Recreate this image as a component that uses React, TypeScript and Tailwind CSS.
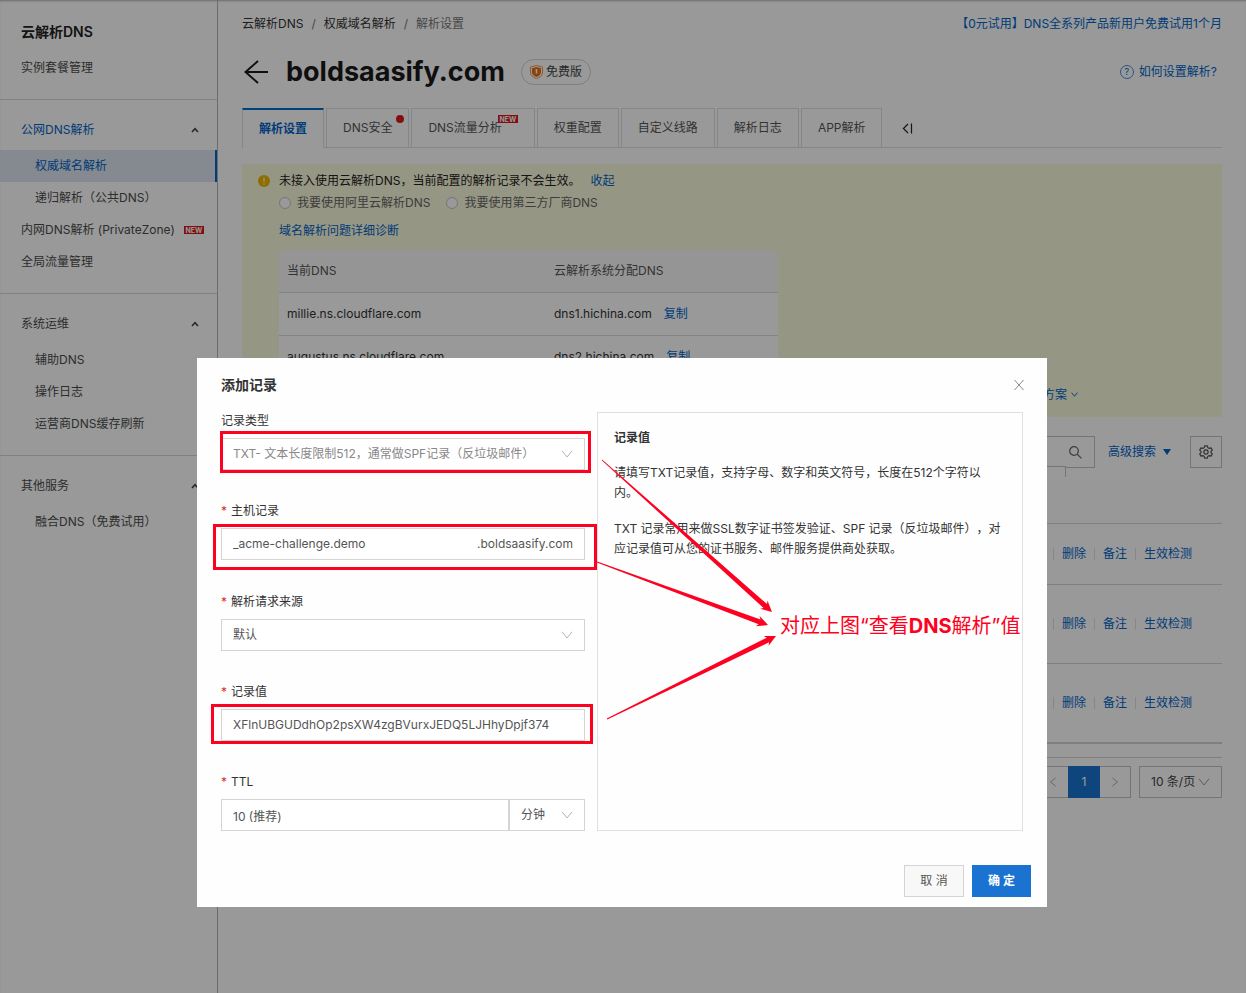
import { ReactNode, SVGProps } from "react";

const menuGroups = [
  {
    title: "公网DNS解析",
    active: true,
    items: [
      { label: "权威域名解析", nested: true, active: true },
      { label: "递归解析（公共DNS）", nested: true },
      { label: "内网DNS解析 (PrivateZone)", isNew: true },
      { label: "全局流量管理" },
    ],
  },
  {
    title: "系统运维",
    items: [
      { label: "辅助DNS", nested: true },
      { label: "操作日志", nested: true },
      { label: "运营商DNS缓存刷新", nested: true },
    ],
  },
  {
    title: "其他服务",
    items: [{ label: "融合DNS（免费试用）", nested: true }],
  },
];

const tabs = [
  { label: "解析设置", active: true },
  { label: "DNS安全", dot: true },
  { label: "DNS流量分析", isNew: true },
  { label: "权重配置" },
  { label: "自定义线路" },
  { label: "解析日志" },
  { label: "APP解析" },
];

const nameServers = [
  { current: "millie.ns.cloudflare.com", assigned: "dns1.hichina.com" },
  { current: "augustus.ns.cloudflare.com", assigned: "dns2.hichina.com" },
];

const rowHeights = ["h-[61px]", "h-[79px]", "h-20"];

function Chevron(props: SVGProps<SVGSVGElement>) {
  return (
    <svg width="12" height="12" viewBox="0 0 12 12" fill="none" stroke="currentColor" aria-hidden="true" {...props}>
      <path d="M1 2.8 L6 9 L11 2.8" />
    </svg>
  );
}

function NewBadge() {
  return (
    <span className="flex h-2 w-5 items-center justify-center bg-[#d8191f] text-[7px] leading-none font-bold text-white">
      NEW
    </span>
  );
}

function Sidebar() {
  return (
    <aside className="w-[218px] shrink-0 border-r border-[#b4b4b4] text-[#4c4c4c]">
      <div className="border-b border-[#d8d8d8] pt-3 pb-[15px]">
        <h2 className="flex h-10 items-center px-[21px] text-sm font-semibold text-[#222]">云解析DNS</h2>
        <a href="#plan" className="flex h-8 items-center px-[21px]">实例套餐管理</a>
      </div>
      {menuGroups.map((group, i) => (
        <div
          key={group.title}
          className={i < menuGroups.length - 1 ? "border-b border-[#d8d8d8] pt-[10px] pb-[15px]" : "pt-[10px]"}
        >
          <button
            className={`flex h-10 w-full items-center justify-between pr-[18px] pl-[21px] ${group.active ? "text-[#0064c8]" : ""}`}
          >
            {group.title}
            <svg width="8" height="6" viewBox="0 0 8 6" fill="none" stroke="#444" strokeWidth="1.6" aria-hidden="true">
              <path d="M1 5 L4 1.6 L7 5" />
            </svg>
          </button>
          {group.items.map((item) => (
            <a
              key={item.label}
              href="#menu"
              className={`flex h-8 items-center gap-[9px] ${item.nested ? "pl-[35px]" : "pl-[21px]"} ${
                item.active ? "border-r-2 border-[#0064c8] bg-[#dde6ee] text-[#0064c8]" : ""
              }`}
            >
              {item.label}
              {item.isNew && <NewBadge />}
            </a>
          ))}
        </div>
      ))}
    </aside>
  );
}

function TabBar() {
  return (
    <nav className="mt-3 flex h-10 items-stretch gap-0.5 border-b border-[#dce1e6]">
      {tabs.map((tab) => (
        <button
          key={tab.label}
          className={`relative -mb-px border-x px-4 ${
            tab.active
              ? "border-t-2 border-x-[#dce1e6] border-t-[#0070cc] bg-white font-semibold text-[#0064c8]"
              : "border-y border-[#dce1e6] text-[#555]"
          } ${tab.isNew ? "pr-8" : ""}`}
        >
          {tab.label}
          {tab.dot && <span className="absolute top-1.5 right-1 size-2 rounded-full bg-[#d8191f]" />}
          {tab.isNew && (
            <span className="absolute top-1.5 right-4">
              <NewBadge />
            </span>
          )}
        </button>
      ))}
      <button aria-label="收起标签" className="ml-[18px] pt-0.5 text-[#222]">
        <svg width="11" height="11" viewBox="0 0 11 11" fill="none" stroke="currentColor" strokeWidth="1.2">
          <path d="M6 1 L1.4 5.5 L6 10 M9.5 0.5 V10.5" />
        </svg>
      </button>
    </nav>
  );
}

function Notice() {
  return (
    <section className="mt-4 h-[253px] bg-[#fafbdc] pt-2 pl-[37px]">
      <div className="flex h-[18px] items-center text-[#222]">
        <svg className="mr-[9px] -ml-[21px]" width="12" height="12" viewBox="0 0 12 12" aria-hidden="true">
          <circle cx="6" cy="6" r="6" fill="#efb600" />
          <path d="M6 2.6 V7 M6 8.2 V9.6" stroke="#fafbdc" strokeWidth="1.3" />
        </svg>
        <span>未接入使用云解析DNS，当前配置的解析记录不会生效。</span>
        <a href="#collapse" className="ml-[10px] text-[#0064c8]">收起</a>
      </div>
      <div className="mt-1 flex h-[18px] items-center gap-4 text-[#666]">
        {["我要使用阿里云解析DNS", "我要使用第三方厂商DNS"].map((label) => (
          <label key={label} className="flex items-center gap-1.5">
            <input
              type="radio"
              name="dns-provider"
              className="size-3 appearance-none rounded-full border border-[#c4c4cc] bg-white"
            />
            {label}
          </label>
        ))}
      </div>
      <a href="#diagnose" className="mt-[10px] block w-fit text-[#0064c8]">域名解析问题详细诊断</a>
      <table className="mt-[10px] w-[499px] table-fixed border-collapse bg-white text-left text-[#333]">
        <thead>
          <tr className="h-[42px] border-b border-[#d9dee3] bg-[#f9f9fb] text-[#555]">
            <th className="w-[267px] pl-2 font-normal">当前DNS</th>
            <th className="pl-2 font-normal">云解析系统分配DNS</th>
          </tr>
        </thead>
        <tbody>
          {nameServers.map((ns) => (
            <tr key={ns.current} className="h-[43px] border-b border-[#d9dee3]">
              <td className="pl-2">{ns.current}</td>
              <td className="pl-2">
                {ns.assigned}
                <button className="ml-3 text-[#0064c8]">复制</button>
              </td>
            </tr>
          ))}
        </tbody>
      </table>
      <div className="mt-[7px] flex justify-end pr-36 text-[#0064c8]">
        <a href="#plans" className="flex items-center gap-1">
          方案
          <Chevron width="7" height="7" strokeWidth="1.6" />
        </a>
      </div>
    </section>
  );
}

function Toolbar() {
  return (
    <div className="mt-[19px] flex h-8 items-center justify-end">
      <div className="relative flex h-8 w-60 items-center border border-[#c4c4c4]">
        <input aria-label="搜索" className="min-w-0 flex-1 px-3 outline-none" />
        <button aria-label="搜索记录" className="mr-3 text-[#666]">
          <svg width="13" height="13" viewBox="0 0 13 13" fill="none" stroke="currentColor" strokeWidth="1.2">
            <circle cx="5" cy="5" r="4.3" />
            <path d="M8.2 8.2 L12.4 12.4" />
          </svg>
        </button>
        <span className="absolute top-[29px] right-[28px] h-[11px] w-24 border-t border-r border-[#c4c4c4] bg-white" />
      </div>
      <button className="ml-[13px] flex items-center gap-[7px] text-[#0064c8]">
        高级搜索
        <svg width="8" height="6" viewBox="0 0 8 6" fill="currentColor" aria-hidden="true">
          <path d="M0 0 H8 L4 6 Z" />
        </svg>
      </button>
      <button
        aria-label="设置"
        className="ml-[19px] flex size-8 items-center justify-center border border-[#c4c4c4] text-[#555]"
      >
        <svg width="14" height="14" viewBox="0 0 14 14" fill="none" stroke="currentColor" strokeWidth="1.2" strokeLinejoin="round">
          <path d="M5.7 0.8 H8.3 L8.8 2.6 L10.2 3.4 L12 2.9 L13.3 5.1 L12 6.4 V7.6 L13.3 8.9 L12 11.1 L10.2 10.6 L8.8 11.4 L8.3 13.2 H5.7 L5.2 11.4 L3.8 10.6 L2 11.1 L0.7 8.9 L2 7.6 V6.4 L0.7 5.1 L2 2.9 L3.8 3.4 L5.2 2.6 Z" />
          <circle cx="7" cy="7" r="2.1" />
        </svg>
      </button>
    </div>
  );
}

function Records() {
  return (
    <>
      <table className="mt-[11px] w-full border-collapse">
        <thead>
          <tr className="h-11 border-b border-[#d4d4d4] bg-[#fdfdfd]">
            <th aria-label="操作" />
          </tr>
        </thead>
        <tbody>
          {rowHeights.map((height, i) => (
            <tr key={i} className={`${height} ${i === 2 ? "border-b-2" : "border-b"} border-[#d4d4d4]`}>
              <td>
                <div className="flex items-center justify-end gap-2 pr-[30px] text-[#0064c8]">
                  <span className="h-3 w-px bg-[#e2e2e2]" />
                  <button>删除</button>
                  <span className="h-3 w-px bg-[#e2e2e2]" />
                  <button>备注</button>
                  <span className="h-3 w-px bg-[#e2e2e2]" />
                  <button>生效检测</button>
                </div>
              </td>
            </tr>
          ))}
        </tbody>
      </table>
      <div className="mt-[13px] flex justify-end border-t border-[#d4d4d4] pt-2">
        <button aria-label="上一页" className="flex h-8 w-8 items-center justify-center border border-r-0 border-[#c4c4c4] text-[#999]">
          <Chevron width="10" height="10" className="rotate-90" />
        </button>
        <button className="h-8 w-8 bg-[#1a73d0] text-white">1</button>
        <button aria-label="下一页" className="flex h-8 w-[31px] items-center justify-center border border-l-0 border-[#c4c4c4] text-[#999]">
          <Chevron width="10" height="10" className="-rotate-90" />
        </button>
        <div className="relative ml-2 w-[83px]">
          <select
            aria-label="每页条数"
            className="h-8 w-full appearance-none border border-[#c4c4c4] pl-[11px] text-[#444]"
          >
            <option>10 条/页</option>
          </select>
          <Chevron className="pointer-events-none absolute top-[10px] right-3 text-[#999]" />
        </div>
      </div>
    </>
  );
}

type FieldProps = {
  id: string;
  label: string;
  required?: boolean;
  mark?: string;
  children: ReactNode;
};

function Field({ id, label, required, mark, children }: FieldProps) {
  return (
    <div className="flex flex-col gap-2">
      <label htmlFor={id} className="flex gap-1 text-[#333]">
        {required && <span className="text-[#e02b20]">*</span>}
        {label}
      </label>
      <div className="relative flex h-8 text-[#555]">
        {children}
        {mark && <span className={`pointer-events-none absolute border-3 border-[#fe0020] ${mark}`} />}
      </div>
    </div>
  );
}

const boxClass = "h-8 border border-[#d4d4d4] bg-white px-[11px] outline-none";

// Tapered arrow that grows from a thin tail to a swept head
function Arrow({ from, to }: { from: [number, number]; to: [number, number] }) {
  const length = Math.hypot(to[0] - from[0], to[1] - from[1]);
  const angle = (Math.atan2(to[1] - from[1], to[0] - from[0]) * 180) / Math.PI;
  const points = [
    [0, -0.5],
    [length - 9, -2.6],
    [length - 11, -5.5],
    [length, 0],
    [length - 11, 5.5],
    [length - 9, 2.6],
    [0, 0.5],
  ];
  return (
    <polygon
      points={points.map((p) => p.join(",")).join(" ")}
      transform={`translate(${from[0]} ${from[1]}) rotate(${angle})`}
      fill="#fe0020"
    />
  );
}

function RecordDialog() {
  return (
    <div role="dialog" aria-labelledby="dialog-title" className="relative w-[850px] bg-[#fefefe]">
      <header className="flex h-[54px] items-center justify-between px-6">
        <h2 id="dialog-title" className="text-sm font-semibold text-[#333]">添加记录</h2>
        <button aria-label="关闭" className="-mr-[1px] text-[#888]">
          <svg width="10" height="10" viewBox="0 0 10 10" stroke="currentColor">
            <path d="M0.5 0 L9.5 10 M9.5 0 L0.5 10" />
          </svg>
        </button>
      </header>
      <div className="flex gap-3 px-6">
        <form className="flex w-[364px] flex-col justify-between">
          <Field id="type" label="记录类型" mark="-top-[7px] -right-1.5 -bottom-[3px] -left-px">
            <select id="type" className={`${boxClass} w-full appearance-none text-[#888]`}>
              <option>TXT- 文本长度限制512，通常做SPF记录（反垃圾邮件）</option>
            </select>
            <Chevron className="pointer-events-none absolute top-[10px] right-3 text-[#b4b4b4]" />
          </Field>
          <Field id="host" label="主机记录" required mark="-top-1 -right-3 -bottom-[10px] -left-2">
            <div className={`${boxClass} flex w-full items-center`}>
              <input id="host" defaultValue="_acme-challenge.demo" className="min-w-0 flex-1 outline-none" />
              <span>.boldsaasify.com</span>
            </div>
          </Field>
          <Field id="source" label="解析请求来源" required>
            <select id="source" className={`${boxClass} w-full appearance-none`}>
              <option>默认</option>
            </select>
            <Chevron className="pointer-events-none absolute top-[10px] right-3 text-[#b4b4b4]" />
          </Field>
          <Field id="value" label="记录值" required mark="-top-[5px] -right-2 -bottom-[3px] -left-[10px]">
            <input
              id="value"
              defaultValue="XFlnUBGUDdhOp2psXW4zgBVurxJEDQ5LJHhyDpjf374"
              className={`${boxClass} w-full`}
            />
          </Field>
          <Field id="ttl" label="TTL" required>
            <input id="ttl" defaultValue="10 (推荐)" className={`${boxClass} min-w-0 flex-1`} />
            <select aria-label="TTL 单位" className={`${boxClass} w-[76px] appearance-none`}>
              <option>分钟</option>
            </select>
            <Chevron className="pointer-events-none absolute top-[10px] right-3 text-[#b4b4b4]" />
          </Field>
        </form>
        <div className="min-h-[419px] flex-1 border border-[#e0e0e0] px-4 pt-[15px] leading-5 text-[#333] [text-spacing-trim:space-all]">
          <h3 className="font-semibold">记录值</h3>
          <p className="mt-[15px] pr-4">请填写TXT记录值，支持字母、数字和英文符号，长度在512个字符以内。</p>
          <p className="mt-4">
            TXT 记录常用来做SSL数字证书签发验证、SPF 记录（反垃圾邮件），对应记录值可从您的证书服务、邮件服务提供商处获取。
          </p>
        </div>
      </div>
      <footer className="flex justify-end gap-2 pt-[34px] pr-4 pb-[10px]">
        <button className="h-8 w-[60px] border border-[#d4d4d4] bg-[#f8f8f8] text-[#555]">取 消</button>
        <button className="h-8 w-[59px] bg-[#1a73d0] font-semibold text-white">确 定</button>
      </footer>

      {/* Annotations */}
      <svg className="pointer-events-none absolute inset-0" width="850" height="549" aria-hidden="true">
        <Arrow from={[405, 102]} to={[575, 254]} />
        <Arrow from={[400, 204]} to={[571, 267]} />
        <Arrow from={[410, 361]} to={[579, 278]} />
      </svg>
      <p className="pointer-events-none absolute top-[254px] left-[583px] text-xl leading-7 whitespace-nowrap text-[#fe0020]">
        对应上图“查看<b className="font-bold">DNS</b>解析”值
      </p>
    </div>
  );
}

export default function App() {
  return (
    <div className="flex min-h-screen bg-white font-[Inter,'Noto_Sans_CJK_SC',sans-serif] text-xs leading-[18px] shadow-[inset_0_2px_2px_-1px_rgba(0,0,0,0.3)]">
      <Sidebar />
      <main className="min-w-0 flex-1 px-6 pt-3 pb-6">
        <div className="flex h-6 items-center justify-between">
          <nav className="flex gap-2 text-[#333]">
            <a href="#dns">云解析DNS</a>
            <span className="text-[#777]">/</span>
            <a href="#domains">权威域名解析</a>
            <span className="text-[#777]">/</span>
            <span className="text-[#777]">解析设置</span>
          </nav>
          <a href="#trial" className="text-[#0064c8]">【0元试用】DNS全系列产品新用户免费试用1个月</a>
        </div>

        <div className="mt-3 flex h-12 items-center">
          <button aria-label="返回" className="ml-0.5 text-[#1a1a1a]">
            <svg width="24" height="24" viewBox="0 0 24 24" fill="none" stroke="currentColor" strokeWidth="2">
              <path d="M24 12 H1.5 M14 1 L1.5 12 L14 23" />
            </svg>
          </button>
          <h1 className="ml-[18px] text-[27px] leading-9 font-bold text-[#1a1a1a]">boldsaasify.com</h1>
          <span className="ml-4 flex h-[26px] items-center gap-[3px] rounded-full border border-[#d4d4d4] px-2 text-[#444]">
            <svg width="13" height="14" viewBox="0 0 13 14" aria-hidden="true">
              <path d="M6.5 0.5 L12.5 2 V7 C12.5 10 10 12.5 6.5 13.6 C3 12.5 0.5 10 0.5 7 V2 Z" fill="none" stroke="#f07818" strokeWidth="0.8" />
              <path d="M6.5 2 L11 3.2 V7 C11 9.4 9 11.2 6.5 12 C4 11.2 2 9.4 2 7 V3.2 Z" fill="#e8700f" />
              <path d="M6.5 4 V8.6" stroke="#fff" strokeWidth="1.6" />
            </svg>
            免费版
          </span>
          <a href="#help" className="mr-[5px] ml-auto flex items-center gap-[5px] text-[#0064c8]">
            <span className="flex size-[14px] items-center justify-center rounded-full border border-[#4a8fd8] text-[9px]">?</span>
            如何设置解析?
          </a>
        </div>

        <TabBar />
        <Notice />
        <Toolbar />
        <Records />
      </main>

      <div className="fixed inset-0 flex items-start justify-center bg-black/40 pt-[358px] pr-0.5">
        <RecordDialog />
      </div>
    </div>
  );
}
